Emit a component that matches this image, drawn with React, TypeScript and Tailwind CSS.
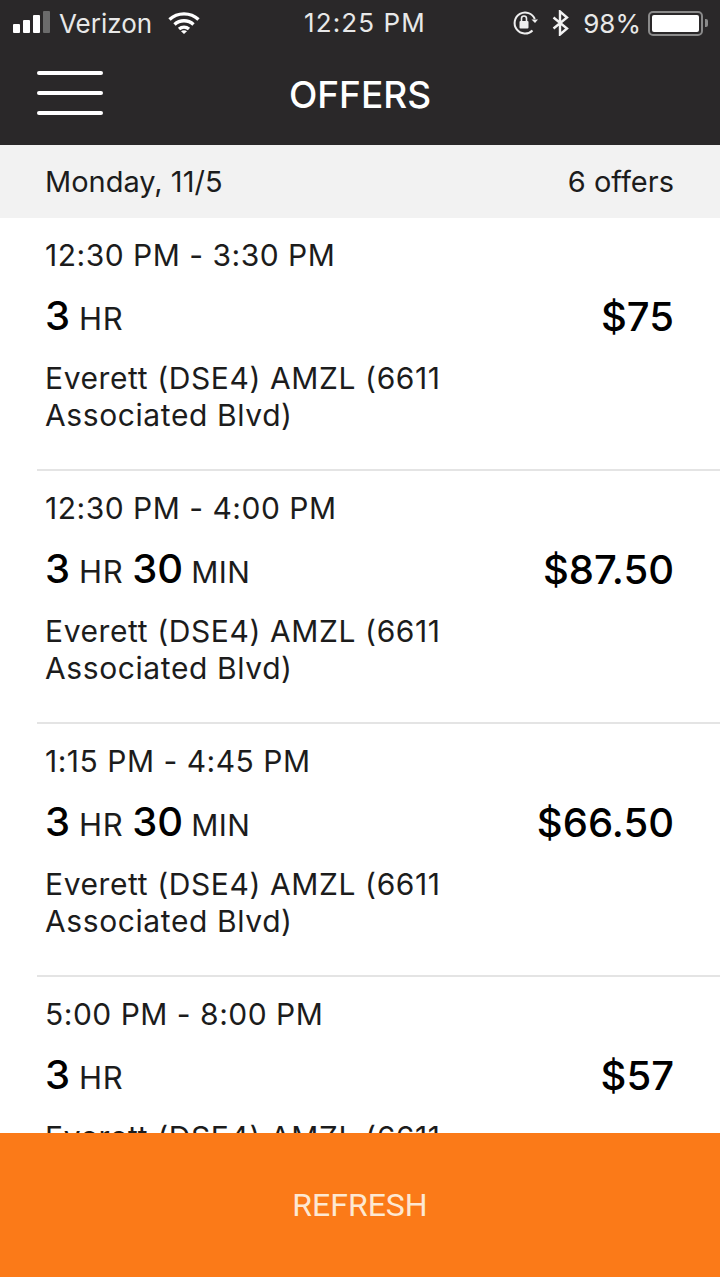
interface Offer {
  time: string
  hours: string
  minutes?: string
  price: string
}

const OFFERS: Offer[] = [
  { time: '12:30 PM - 3:30 PM', hours: '3', price: '$75' },
  { time: '12:30 PM - 4:00 PM', hours: '3', minutes: '30', price: '$87.50' },
  { time: '1:15 PM - 4:45 PM', hours: '3', minutes: '30', price: '$66.50' },
  { time: '5:00 PM - 8:00 PM', hours: '3', price: '$57' },
]

function StatusBar() {
  return (
    <div className="relative flex h-[46px] items-center justify-between pl-[13px] pr-[12px] text-[26px] text-[#e8e8e8]">
      <div className="flex items-center">
        <div className="flex items-end gap-[3px] pb-[3px]">
          <span className="h-[9px] w-[7px] rounded-[1px] bg-white" />
          <span className="h-[13px] w-[7px] rounded-[1px] bg-white" />
          <span className="h-[18px] w-[7px] rounded-[1px] bg-white" />
          <span className="h-[22px] w-[7px] rounded-[1px] bg-[#6b6b6b]" />
        </div>
        <span className="ml-[9px]">Verizon</span>
        <svg className="ml-[16px]" width="32" height="24" viewBox="0 0 32 24" fill="none" stroke="#fff" strokeWidth="3.4">
          <path d="M1.5 8.5C9.5 1 22.5 1 30.5 8.5" />
          <path d="M6.5 13.5C12 8.5 20 8.5 25.5 13.5" />
          <path d="M11 18C14 15.5 18 15.5 21 18" />
          <path d="M13 20.2L16 23l3-2.8c-1.8-1.4-4.2-1.4-6 0z" fill="#fff" stroke="none" />
        </svg>
      </div>
      <span className="absolute left-[304px] top-[7px] leading-[32px] tracking-[1.1px]">12:25 PM</span>
      <div className="flex items-center">
        <svg width="27" height="26" viewBox="0 0 27 26" fill="none" stroke="#eee" strokeWidth="2">
          <path d="M20.5 20.5A10.5 10.5 0 1 1 22.8 9" />
          <path d="M19.5 9.5l3.5 3.5 3-3.5" fill="#eee" stroke="none" />
          <rect x="7.5" y="11" width="9" height="7.5" rx="1" fill="#eee" stroke="none" />
          <path d="M9.5 11V8.5a2.5 2.5 0 0 1 5 0V11" strokeWidth="1.6" />
        </svg>
        {/* bluetooth rune, thicker than the lucide one */}
        <svg className="ml-[13px]" width="17" height="26" viewBox="0 0 17 26" fill="none" stroke="#f2f2f2" strokeWidth="2.4">
          <path d="M1.5 7.5L15 18.5L8 24.5V1.5L15 7.5L1.5 18.5" />
        </svg>
        <span className="ml-[14px]">98%</span>
        <div className="ml-[7px] flex h-[25px] w-[55px] items-center rounded-[5px] border-2 border-[#8a8a8a] p-[2px]">
          <span className="h-full w-full rounded-[2px] bg-white" />
        </div>
        <span className="ml-[2px] h-[8px] w-[3px] rounded-r-[2px] bg-[#8a8a8a]" />
      </div>
    </div>
  )
}

function OfferRow({ offer }: { offer: Offer }) {
  return (
    <div className="ml-[37px] h-[253px] shrink-0 border-b-2 border-[#e4e4e4] pl-[8px] pr-[46px] pt-[19px] text-[30px] tracking-[0.5px] text-[#1c1c1c]">
      <p className="leading-[37px]">{offer.time}</p>
      <div className="mt-[17px] flex items-center justify-between text-black">
        <p className="flex items-baseline">
          <span className="text-[40px] font-medium leading-[50px] tracking-normal">{offer.hours}</span>
          <span className="ml-[9px] text-[31px] tracking-[0.6px] text-[#1c1c1c]">HR</span>
          {offer.minutes && (
            <>
              <span className="ml-[9px] text-[40px] font-medium leading-[50px] tracking-normal">{offer.minutes}</span>
              <span className="ml-[8px] text-[#1c1c1c]">MIN</span>
            </>
          )}
        </p>
        <p className="text-[40px] font-medium leading-[50px] tracking-normal">{offer.price}</p>
      </div>
      <p className="mt-[17px] w-[420px] leading-[37px] tracking-[0.6px]">
        Everett (DSE4) AMZL (6611 Associated Blvd)
      </p>
    </div>
  )
}

export default function App() {
  return (
    <div className="flex h-[1277px] w-[720px] flex-col overflow-hidden bg-white font-['Inter',sans-serif]">
      <div className="h-[145px] shrink-0 bg-[#2a2829]">
        <StatusBar />
        <div className="relative flex h-[97px] items-center justify-center">
          <div className="absolute left-[37px] top-[25px] flex w-[66px] flex-col gap-[16px]">
            <span className="h-[4px] rounded-full bg-white" />
            <span className="h-[4px] rounded-full bg-white" />
            <span className="h-[4px] rounded-full bg-white" />
          </div>
          <h1 className="text-[37px] font-medium text-white">OFFERS</h1>
        </div>
      </div>

      <div className="flex h-[73px] shrink-0 items-center justify-between bg-[#f2f2f2] pl-[45px] pr-[46px] text-[29px] text-[#1c1c1c]">
        <span>Monday, 11/5</span>
        <span>6 offers</span>
      </div>

      <div className="min-h-0 flex-1 overflow-hidden">
        {OFFERS.map(offer => (
          <OfferRow key={offer.time} offer={offer} />
        ))}
      </div>

      <button className="h-[144px] shrink-0 bg-[#fb7a18] font-['Roboto',sans-serif] text-[32px] text-[#fde8d2]">REFRESH</button>
    </div>
  )
}
